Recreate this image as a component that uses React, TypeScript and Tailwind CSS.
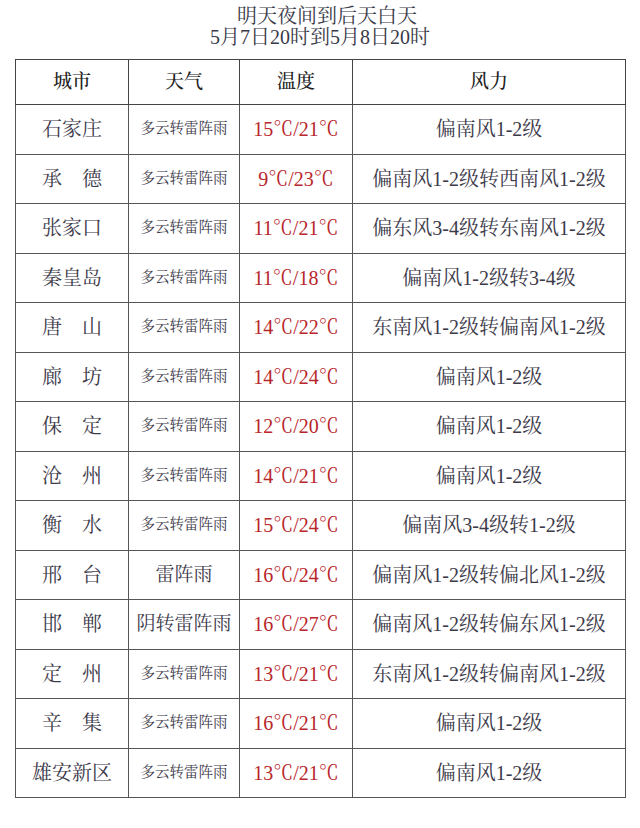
import React from "react";

interface Row {
  city: string;
  weather: string;
  temp: string;
  wind: string;
  big?: boolean;
}

const rows: Row[] = [
  { city: "石家庄", weather: "多云转雷阵雨", temp: "15℃/21℃", wind: "偏南风1-2级" },
  { city: "承　德", weather: "多云转雷阵雨", temp: "9℃/23℃", wind: "偏南风1-2级转西南风1-2级" },
  { city: "张家口", weather: "多云转雷阵雨", temp: "11℃/21℃", wind: "偏东风3-4级转东南风1-2级" },
  { city: "秦皇岛", weather: "多云转雷阵雨", temp: "11℃/18℃", wind: "偏南风1-2级转3-4级" },
  { city: "唐　山", weather: "多云转雷阵雨", temp: "14℃/22℃", wind: "东南风1-2级转偏南风1-2级" },
  { city: "廊　坊", weather: "多云转雷阵雨", temp: "14℃/24℃", wind: "偏南风1-2级" },
  { city: "保　定", weather: "多云转雷阵雨", temp: "12℃/20℃", wind: "偏南风1-2级" },
  { city: "沧　州", weather: "多云转雷阵雨", temp: "14℃/21℃", wind: "偏南风1-2级" },
  { city: "衡　水", weather: "多云转雷阵雨", temp: "15℃/24℃", wind: "偏南风3-4级转1-2级" },
  { city: "邢　台", weather: "雷阵雨", temp: "16℃/24℃", wind: "偏南风1-2级转偏北风1-2级", big: true },
  { city: "邯　郸", weather: "阴转雷阵雨", temp: "16℃/27℃", wind: "偏南风1-2级转偏东风1-2级", big: true },
  { city: "定　州", weather: "多云转雷阵雨", temp: "13℃/21℃", wind: "东南风1-2级转偏南风1-2级" },
  { city: "辛　集", weather: "多云转雷阵雨", temp: "16℃/21℃", wind: "偏南风1-2级" },
  { city: "雄安新区", weather: "多云转雷阵雨", temp: "13℃/21℃", wind: "偏南风1-2级" },
];

const serif =
  "font-['Liberation_Serif','Noto_Serif_CJK_SC','Noto_Sans_CJK_SC',serif]";

export default function App() {
  return (
    <div className={`w-[640px] h-[828px] bg-white ${serif} text-[#3d3a4a]`}>
      {/* title */}
      <div className="pt-[6px] text-center text-[20px] leading-[21px] text-[#3a3a48]">
        <div className="pl-[14px]">明天夜间到后天白天</div>
        <div>5月7日20时到5月8日20时</div>
      </div>

      <table className="ml-[15px] mt-[11px] w-[611px] table-fixed border-collapse border border-[#444]">
        <colgroup>
          <col className="w-[113px]" />
          <col className="w-[111px]" />
          <col className="w-[113px]" />
          <col />
        </colgroup>
        <thead>
          <tr className="h-[45px]">
            {["城市", "天气", "温度", "风力"].map((h) => (
              <th
                key={h}
                className="border border-[#444] text-center text-[19px] font-medium text-[#222]"
              >
                {h}
              </th>
            ))}
          </tr>
        </thead>
        <tbody>
          {rows.map((r) => (
            <tr key={r.city} className="h-[49.5px]">
              <td className="border border-[#555] text-center text-[20px] whitespace-nowrap">
                {r.city}
              </td>
              <td
                className={`border border-[#555] text-center whitespace-nowrap ${
                  r.big ? "text-[19px]" : "text-[14.5px]"
                }`}
              >
                {r.weather}
              </td>
              <td className="border border-[#555] text-center text-[20px] whitespace-nowrap text-[#b8262b]">
                {r.temp}
              </td>
              <td className="border border-[#555] text-center text-[20px] whitespace-nowrap">
                {r.wind}
              </td>
            </tr>
          ))}
        </tbody>
      </table>
    </div>
  );
}
